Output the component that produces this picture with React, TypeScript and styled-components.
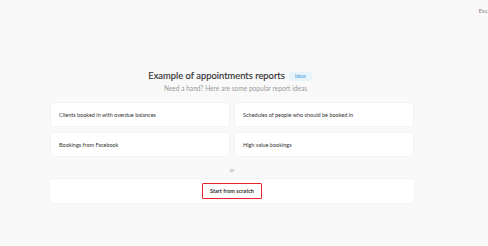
import React from "react";
import styled, { createGlobalStyle } from "styled-components";

const Global = createGlobalStyle`
  html, body { margin: 0; padding: 0; background: #f9f9f9; }
  body { font-family: Lato, "Noto Sans", sans-serif; color: #2b2b2b; }
  * { box-sizing: border-box; }
`;

const Page = styled.div`
  width: 488px;
  height: 246px;
  display: flex;
  flex-direction: column;
`;

const TopBar = styled.div`
  display: flex;
  justify-content: flex-end;
  padding: 7px 0 0 0;
  height: 16px;
`;

const Esc = styled.span`
  font-size: 6.5px;
  color: #8a8a8a;
  line-height: 8px;
`;

const Content = styled.div`
  width: 364px;
  margin: 54px 0 0 50px;
  display: flex;
  flex-direction: column;
  align-items: center;
`;

const TitleRow = styled.div`
  display: flex;
  align-items: center;
  gap: 4px;
  margin-left: -4px;
`;

const Title = styled.h1`
  margin: 0;
  font-size: 9.4px;
  font-weight: 400;
  color: #333;
  line-height: 12px;
  -webkit-text-stroke: 0.15px #333;
`;

const Badge = styled.span`
  background: #e6f3fb;
  color: #3aa0d8;
  font-size: 4.8px;
  border-radius: 3px;
  padding: 2px 6px;
  line-height: 5px;
`;

const Subtitle = styled.p`
  margin: 2px 0 0;
  font-size: 6.6px;
  color: #9a9a9a;
  line-height: 8px;
  padding-left: 7px;
`;

const Grid = styled.div`
  margin-top: 11px;
  width: 100%;
  display: grid;
  grid-template-columns: 178px 178px;
  justify-content: space-between;
  padding: 0 1px;
  row-gap: 7px;
`;

const Card = styled.div`
  background: #fff;
  border-radius: 2px;
  height: 23px;
  display: flex;
  align-items: center;
  padding: 0 8px;
  font-size: 5.5px;
  color: #333;
  box-shadow: 0 0 0 0.5px #efefef;
`;

const Or = styled.div`
  margin-top: 11px;
  font-size: 5.5px;
  color: #aaa;
  line-height: 7px;
`;

const ScratchCard = styled.div`
  margin-top: 5px;
  width: 100%;
  height: 24px;
  background: #fff;
  border-radius: 2px;
  display: flex;
  align-items: center;
  justify-content: center;
  box-shadow: 0 0 0 0.5px #efefef;
`;

const ScratchButton = styled.button`
  width: 60px;
  height: 16px;
  background: #fff;
  border: 1.5px solid #e3262e;
  border-radius: 1px;
  font-family: inherit;
  font-size: 5.5px;
  font-weight: 700;
  color: #333;
  padding: 0;
  cursor: pointer;
`;

const ideas = [
  "Clients booked in with overdue balances",
  "Schedules of people who should be booked in",
  "Bookings from Facebook",
  "High value bookings",
];

export default function App() {
  return (
    <Page>
      <Global />
      <TopBar>
        <Esc>Esc</Esc>
      </TopBar>
      <Content>
        <TitleRow>
          <Title>Example of appointments reports</Title>
          <Badge>Ideas</Badge>
        </TitleRow>
        <Subtitle>Need a hand? Here are some popular report ideas</Subtitle>
        <Grid>
          {ideas.map((t) => (
            <Card key={t}>{t}</Card>
          ))}
        </Grid>
        <Or>or</Or>
        <ScratchCard>
          <ScratchButton>Start from scratch</ScratchButton>
        </ScratchCard>
      </Content>
    </Page>
  );
}
